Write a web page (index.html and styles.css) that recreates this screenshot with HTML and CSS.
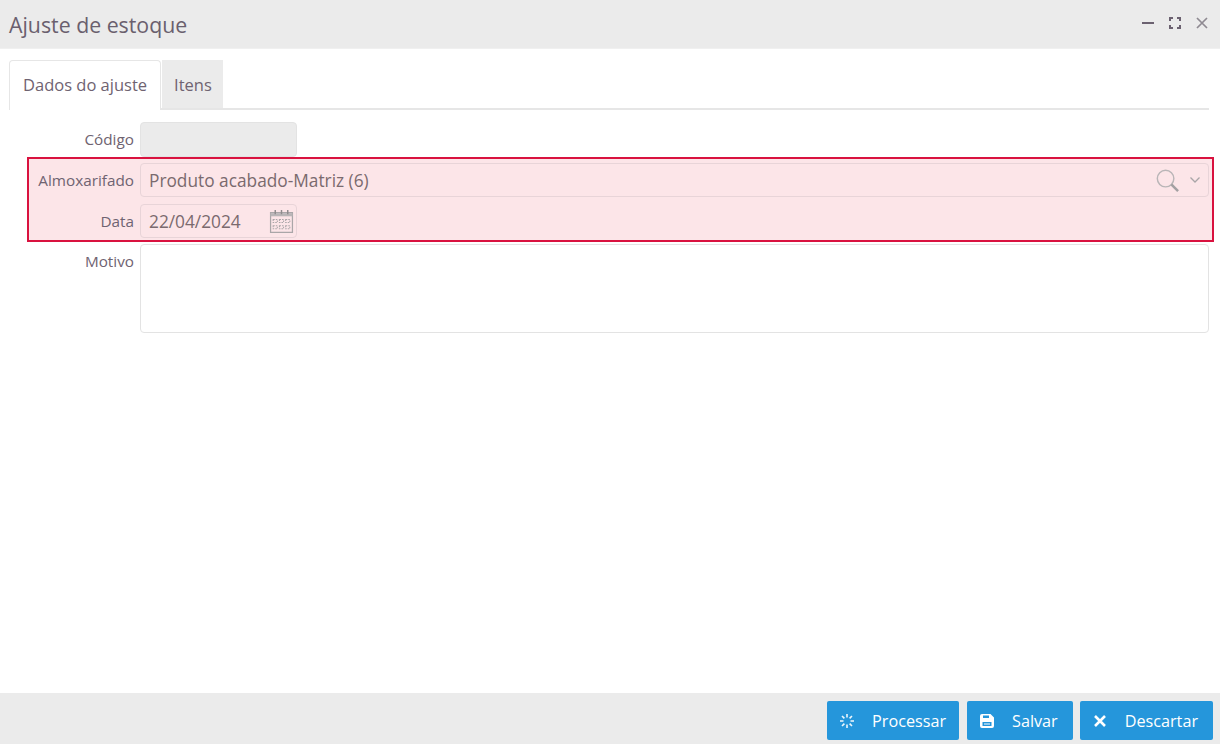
FILE: index.html
```html
<!DOCTYPE html>
<html lang="pt-BR">
<head>
<meta charset="utf-8">
<title>Ajuste de estoque</title>
<link rel="stylesheet" href="styles.css">
</head>
<body>
<div class="window">
  <header class="titlebar">
    <h1 class="title">Ajuste de estoque</h1>
    <div class="win-controls">
      <svg class="win-icon" viewBox="0 0 14 14"><path d="M1 7h12" stroke="#6b6170" stroke-width="2"/></svg>
      <svg class="win-icon" viewBox="0 0 14 14"><path d="M2 5V2h3M9 2h3v3M12 9v3H9M5 12H2V9" fill="none" stroke="#6b6170" stroke-width="2"/></svg>
      <svg class="win-icon" viewBox="0 0 14 14"><path d="M2 2l10 10M12 2L2 12" fill="none" stroke="#8f8a92" stroke-width="1.7"/></svg>
    </div>
  </header>
  <main class="content">
    <nav class="tabs">
      <div class="tab tab-active">Dados do ajuste</div>
      <div class="tab">Itens</div>
    </nav>
    <form class="form">
      <div class="row row-first">
        <label class="label">Código</label>
        <div class="input input-short input-disabled"></div>
      </div>
      <div class="highlight">
        <div class="row">
          <label class="label">Almoxarifado</label>
          <div class="input input-full">
            <span class="value">Produto acabado-Matriz (6)</span>
            <svg class="search-icon" viewBox="0 0 26 26"><circle cx="11" cy="11" r="8.6" fill="none" stroke="#b9b5b7" stroke-width="1.5"/><path d="M17 17l7 7" stroke="#a3a0a2" stroke-width="2.6"/></svg>
            <svg class="chevron-icon" viewBox="0 0 12 8"><path d="M1.5 1.5L6 6l4.5-4.5" fill="none" stroke="#a9a5a7" stroke-width="1.3"/></svg>
          </div>
        </div>
        <div class="row">
          <label class="label">Data</label>
          <div class="input input-short">
            <span class="value">22/04/2024</span>
            <svg class="calendar-icon" viewBox="0 0 24 24"><path d="M1.5 3.5h21v19h-21z" fill="none" stroke="#aaa6a8" stroke-width="1.2"/><path d="M1.5 4h21v3h-21z" fill="#b9b5b7"/><path d="M6 1v4M12 1v4M18 1v4" stroke="#8f8b8d" stroke-width="1.4"/><path d="M4 10h4v3H4zM10 10h4v3h-4zM16 10h4v3h-4zM4 16h4v3H4zM10 16h4v3h-4zM16 16h4v3h-4z" fill="none" stroke="#aaa6a8" stroke-width="1" stroke-dasharray="1.5 1"/></svg>
          </div>
        </div>
      </div>
      <div class="row row-motivo">
        <label class="label">Motivo</label>
        <div class="input input-full input-area"></div>
      </div>
    </form>
  </main>
  <footer class="footer">
    <button class="btn btn-process" type="button">
      <svg class="btn-icon" viewBox="0 0 16 16"><path d="M8 1v3.5M8 11.5V15M1 8h3.5M11.5 8H15M3 3l2.4 2.4M10.6 10.6L13 13M13 3l-2.4 2.4M5.4 10.6L3 13" fill="none" stroke="#eef7fc" stroke-width="1.6"/></svg>
      <span>Processar</span>
    </button>
    <button class="btn" type="button">
      <svg class="btn-icon" viewBox="0 0 16 16"><path fill-rule="evenodd" fill="#fff" d="M1 3a2 2 0 0 1 2-2h8.5L15 4.5V13a2 2 0 0 1-2 2H3a2 2 0 0 1-2-2zM4 2.5V5h6V2.5zM3.5 9v4h9V9z"/><path d="M5 10.5h6v1H5z" fill="#fff"/></svg>
      <span>Salvar</span>
    </button>
    <button class="btn" type="button">
      <svg class="btn-icon" viewBox="0 0 16 16"><path d="M3 3l10 10M13 3L3 13" fill="none" stroke="#fff" stroke-width="2.6"/></svg>
      <span>Descartar</span>
    </button>
  </footer>
</div>
</body>
</html>
```
FILE: styles.css
```css
* { box-sizing: border-box; }
html, body { height: 100%; }
body {
  margin: 0;
  background: #fff;
  color: #6b6170;
  font-family: "Open Sans", "Noto Sans", sans-serif;
  overflow: hidden;
}
.window { display: flex; flex-direction: column; height: 744px; }
.titlebar {
  flex: none;
  height: 49px;
  background: #ebebeb;
  border-bottom: 1px solid #f0f0f0;
  display: flex;
  align-items: center;
  justify-content: space-between;
  padding: 0 11px 0 9px;
}
.title { margin: 0; font-size: 21.3px; font-weight: 400; color: #6a5f6e; }
.win-controls { display: flex; gap: 13px; margin-top: -3px; }
.win-icon { width: 14px; height: 14px; display: block; }
.content { flex: 1; padding: 11px 11px 0 9px; }
.tabs {
  display: flex;
  height: 50px;
  border-bottom: 2px solid #e6e6e6;
  gap: 1px;
}
.tab {
  height: 48px;
  padding: 0 11px 0 12px;
  background: #ebebeb;
  font-size: 16.5px;
  line-height: 50px;
  color: #6f6371;
}
.tab-active {
  height: 50px;
  padding: 0 13px;
  background: #fff;
  border: 1px solid #e6e6e6;
  border-bottom: 0;
  border-radius: 4px 4px 0 0;
  line-height: 48px;
}
.form { display: flex; flex-direction: column; }
.row { display: flex; align-items: flex-start; gap: 6px; }
.row-first { padding-top: 12px; height: 47px; }
.row-motivo { margin-top: 2px; }
.label {
  flex: none;
  width: 125px;
  padding-top: 7px;
  text-align: right;
  font-size: 15.3px;
  line-height: 20px;
  color: #6f6371;
}
.highlight {
  margin: 0 -5px 0 18px;
  padding: 4px 3px 3px 0;
  height: 85px;
  background: #fce5e8;
  border: 2px solid #d9123f;
  display: flex;
  flex-direction: column;
  gap: 7px;
}
.highlight .row { margin-left: -20px; }
.highlight .input { background: transparent; border-color: #e8d4d8; }
.input {
  height: 34px;
  background: #fff;
  border: 1px solid #e3e3e3;
  border-radius: 4px;
  display: flex;
  align-items: center;
  padding: 0 8px;
  font-size: 17.3px;
  color: #7a6a6e;
}
.input-short { width: 157px; flex: none; }
.input-full { flex: 1; min-width: 0; }
.input-disabled { background: #ebebeb; height: 35px; }
.input-area { height: 89px; }
.value { flex: 1; }
.search-icon { width: 25px; height: 25px; flex: none; margin-right: 9px; }
.chevron-icon { width: 12px; height: 8px; flex: none; margin-right: -1px; }
.calendar-icon { width: 25px; height: 25px; flex: none; margin-right: -6px; }
.footer {
  flex: none;
  height: 51px;
  background: #ebebeb;
  display: flex;
  justify-content: flex-end;
  align-items: flex-start;
  gap: 7px;
  padding: 8px 7px 0 0;
}
.btn {
  height: 39px;
  border: 0;
  border-radius: 2px;
  background: #2596db;
  color: #fff;
  display: flex;
  align-items: center;
  gap: 17px;
  padding: 0 15px 0 12px;
  font-family: inherit;
  font-size: 16.2px;
}
.btn-process { margin-right: 1px; padding-right: 13px; }
.btn-icon { width: 16px; height: 16px; flex: none; }
```
